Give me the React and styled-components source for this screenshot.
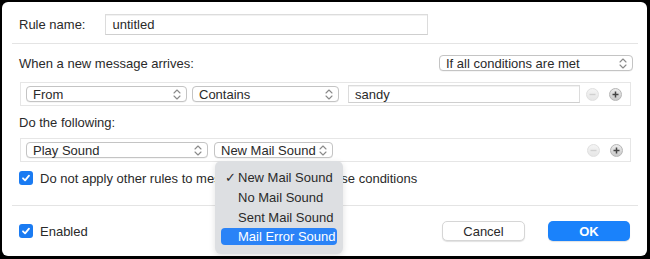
import React from "react";
import styled, { createGlobalStyle } from "styled-components";

const Global = createGlobalStyle`
  html, body { margin: 0; padding: 0; background: #000; }
  body { width: 650px; height: 259px; overflow: hidden; }
  * { box-sizing: border-box; }
`;

const Panel = styled.div`
  position: relative;
  margin: 2px 3px 0 2px;
  width: 645px;
  height: 254px;
  background: #fff;
  border-radius: 6px;
  display: flex;
  flex-direction: column;
  font-family: "Liberation Sans", Arial, sans-serif;
  font-size: 13px;
  color: #2a2a2a;
`;

const Row = styled.div`
  display: flex;
  align-items: center;
  height: ${(p) => p.$h || 16}px;
  margin-top: ${(p) => p.$mt || 0}px;
  padding-left: ${(p) => (p.$pl != null ? p.$pl : 17)}px;
  padding-right: ${(p) => (p.$pr != null ? p.$pr : 0)}px;
`;

const Label = styled.span`
  white-space: nowrap;
  margin-right: ${(p) => p.$mr || 0}px;
`;

const TextField = styled.div`
  width: ${(p) => p.$w}px;
  height: ${(p) => p.$h || 21}px;
  border: 1px solid #dcdcdc;
  border-bottom-color: #cfcfcf;
  background: #fff;
  display: flex;
  align-items: center;
  padding-left: 6px;
  box-shadow: inset 0 1px 0 #f2f2f2;
`;

const Divider = styled.div`
  height: 1px;
  background: #e4e4e4;
  margin: ${(p) => p.$mt}px 9px 0 10px;
`;

const Spacer = styled.div`
  flex: 1;
`;

const RuleBox = styled.div`
  display: flex;
  align-items: center;
  margin: ${(p) => p.$mt}px 16px 0 18px;
  height: ${(p) => p.$h || 24}px;
  border: 1px solid #e6e6e6;
  padding-left: 5px;
`;

const PopupBox = styled.div`
  width: ${(p) => p.$w}px;
  height: 16px;
  margin-right: ${(p) => p.$mr || 0}px;
  border: 1px solid #c4c4c4;
  border-radius: 4px;
  background: #fff;
  display: flex;
  align-items: center;
  padding-left: 6px;
  padding-right: 5px;
  box-shadow: 0 0.5px 0 rgba(0, 0, 0, 0.08);
  & > span { flex: 1; white-space: nowrap; }
`;

const Chevrons = () => (
  <svg width="8" height="11" viewBox="0 0 8 11">
    <path d="M1 4 L4 1 L7 4" fill="none" stroke="#8a8a8a" strokeWidth="1.1" strokeLinecap="round" strokeLinejoin="round" />
    <path d="M1 7 L4 10 L7 7" fill="none" stroke="#8a8a8a" strokeWidth="1.1" strokeLinecap="round" strokeLinejoin="round" />
  </svg>
);

const Popup = ({ w, mr, children }) => (
  <PopupBox $w={w} $mr={mr}>
    <span>{children}</span>
    <Chevrons />
  </PopupBox>
);

const RoundBtn = styled.div`
  width: 13px;
  height: 13px;
  border-radius: 50%;
  margin-left: ${(p) => p.$ml}px;
  display: flex;
  align-items: center;
  justify-content: center;
  background: ${(p) => (p.$disabled ? "linear-gradient(#f4f4f4, #e6e6e6)" : "linear-gradient(#ececec, #c9c9c9)")};
  border: 1px solid ${(p) => (p.$disabled ? "#e0e0e0" : "#b5b5b5")};
`;

const Minus = ({ ml }) => (
  <RoundBtn $ml={ml} $disabled>
    <svg width="7" height="7" viewBox="0 0 7 7">
      <path d="M0.5 3.5 H6.5" stroke="#d0d0d0" strokeWidth="1.4" />
    </svg>
  </RoundBtn>
);

const Plus = () => (
  <RoundBtn $ml={10}>
    <svg width="7" height="7" viewBox="0 0 7 7">
      <path d="M0.5 3.5 H6.5 M3.5 0.5 V6.5" stroke="#444" strokeWidth="1.5" />
    </svg>
  </RoundBtn>
);

const CheckBox = styled.div`
  width: 14px;
  height: 14px;
  border-radius: 3px;
  background: #1a7bf2;
  display: flex;
  align-items: center;
  justify-content: center;
  margin-right: 7px;
  flex-shrink: 0;
`;

const Check = () => (
  <CheckBox>
    <svg width="10" height="10" viewBox="0 0 10 10">
      <path d="M2 5.3 L4.1 7.4 L8 2.6" fill="none" stroke="#fff" strokeWidth="1.8" strokeLinecap="round" strokeLinejoin="round" />
    </svg>
  </CheckBox>
);

const Button = styled.div`
  width: ${(p) => p.$w}px;
  height: 20px;
  margin-right: ${(p) => p.$mr || 0}px;
  border-radius: 5px;
  display: flex;
  align-items: center;
  justify-content: center;
  background: ${(p) => (p.$primary ? "#1a82fb" : "#fff")};
  color: ${(p) => (p.$primary ? "#fff" : "#2a2a2a")};
  font-weight: ${(p) => (p.$primary ? 700 : 400)};
  border: ${(p) => (p.$primary ? "none" : "1px solid #d6d6d6")};
  box-shadow: 0 1px 1px rgba(0, 0, 0, 0.12);
`;

const Menu = styled.div`
  position: absolute;
  left: 213px;
  top: 159px;
  width: 128px;
  height: 93px;
  background: #dddfe2;
  border-radius: 6px;
  padding: 6px 6px 0 6px;
  box-shadow: 0 2px 6px rgba(0, 0, 0, 0.12);
  display: flex;
  flex-direction: column;
`;

const MenuItem = styled.div`
  height: ${(p) => (p.$active ? 17 : 20)}px;
  margin-top: ${(p) => (p.$active ? 1 : 0)}px;
  display: flex;
  align-items: center;
  border-radius: 4px;
  padding-left: 4px;
  background: ${(p) => (p.$active ? "#2a83f7" : "transparent")};
  color: ${(p) => (p.$active ? "#fff" : "#2a2a2a")};
  white-space: nowrap;
`;

const Tick = styled.span`
  display: inline-block;
  width: 13px;
`;

export default function App() {
  return (
    <>
      <Global />
      <Panel>
        <Row $h={21} $mt={12}>
          <Label $mr={20}>Rule name:</Label>
          <TextField $w={323}>untitled</TextField>
        </Row>
        <Divider $mt={8} />
        <Row $h={16} $mt={11} $pr={14}>
          <Label>When a new message arrives:</Label>
          <Spacer />
          <Popup w={194}>If all conditions are met</Popup>
        </Row>
        <RuleBox $mt={11} $h={24}>
          <Popup w={161} mr={5}>From</Popup>
          <Popup w={147} mr={9}>Contains</Popup>
          <TextField $w={232} $h={18}>sandy</TextField>
          <Minus ml={6} />
          <Plus />
        </RuleBox>
        <Row $h={16} $mt={8}>
          <Label>Do the following:</Label>
        </Row>
        <RuleBox $mt={8} $h={24}>
          <Popup w={182} mr={6}>Play Sound</Popup>
          <Popup w={119} mr={0}>New Mail Sound</Popup>
          <Minus ml={254} />
          <Plus />
        </RuleBox>
        <Row $h={16} $mt={8}>
          <Check />
          <Label>Do not apply other rules to messages that match these conditions</Label>
        </Row>
        <Divider $mt={19} />
        <Row $h={20} $mt={15} $pr={17}>
          <Check />
          <Label>Enabled</Label>
          <Spacer />
          <Button $w={83} $mr={23}>Cancel</Button>
          <Button $w={82} $primary>OK</Button>
        </Row>
        <Menu>
          <MenuItem><Tick>✓</Tick>New Mail Sound</MenuItem>
          <MenuItem><Tick />No Mail Sound</MenuItem>
          <MenuItem><Tick />Sent Mail Sound</MenuItem>
          <MenuItem $active><Tick />Mail Error Sound</MenuItem>
        </Menu>
      </Panel>
    </>
  );
}
